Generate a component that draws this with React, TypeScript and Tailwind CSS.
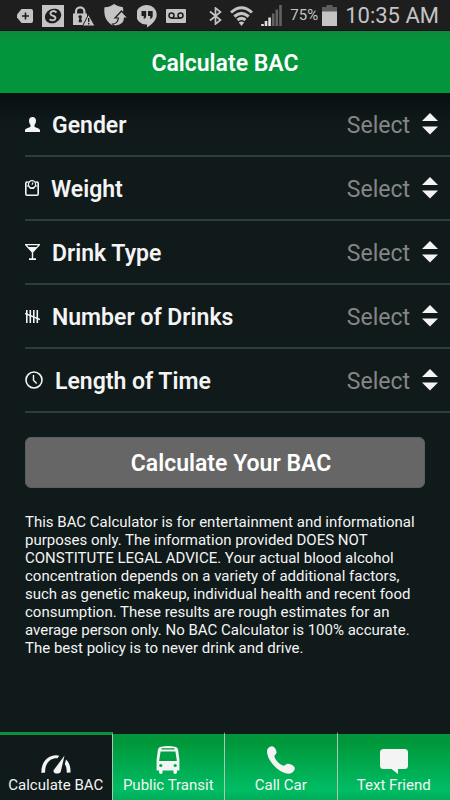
import React, { useState } from 'react';

interface FieldProps {
  id: string;
  label: string;
  options: string[];
  icon: React.ReactNode;
}

interface TabProps {
  label: string;
  icon: React.ReactNode;
  active: boolean;
  onClick: () => void;
}

const PersonIcon = () => (
  <svg width="15" height="15" viewBox="0 0 15 15" fill="currentColor">
    <path d="M7.500 0C5.300 0 4 1.500 4 3.800c0 1.700.6 3.200 1.500 4.100v1.600C5 11 0 10.700 0 13.500V15h15v-1.500c0-2.800-5-2.500-5.500-4V7.900C10.400 7 11 5.500 11 3.800 11 1.500 9.700 0 7.500 0z" />
  </svg>
);

const ScaleIcon = () => (
  <svg width="14" height="16" viewBox="0 0 14 16" fill="none" stroke="currentColor">
    <path d="M3.500 2H2Q.8 2 .8 3.200V14q0 1.200 1.200 1.200h10q1.200 0 1.200-1.200V3.200Q13.200 2 12 2h-1.500" strokeWidth="1.600" />
    <path d="M1.500 6h2l2 2.300h3l2-2.300h2" strokeWidth="1.200" />
    <circle cx="7" cy="4.300" r="3.600" strokeWidth="1.200" fill="#101a1a" />
    <path d="M7 4.800 8 2.500" strokeWidth="1.100" />
  </svg>
);

const GlassIcon = () => (
  <svg width="15" height="16" viewBox="0 0 15 16" fill="currentColor">
    <path d="M0 0h15v1L8.200 8.500v5.700H11V16H4v-1.800h2.800V8.500L0 1zm2 1.200L3.600 3h7.800L13 1.200z" fillRule="evenodd" />
  </svg>
);

const TallyIcon = () => (
  <svg width="15" height="13" viewBox="0 0 15 13" fill="none" stroke="currentColor">
    <path d="M1.800 0v13M5.300 0v13M8.800 0v13M12.300 0v13" strokeWidth="1.600" />
    <path d="M0 3.500 15 9.500" strokeWidth="1.400" />
  </svg>
);

const ClockIcon = () => (
  <svg width="18" height="18" viewBox="0 0 18 18" fill="none" stroke="currentColor">
    <circle cx="9" cy="9" r="8" strokeWidth="1.600" />
    <path d="M8.500 4v5.200l3.200 3.300" strokeWidth="1.400" />
  </svg>
);

const GaugeIcon = () => (
  <svg width="30" height="20" viewBox="0 0 30 20" fill="currentColor">
    <path d="M.5 19C-.2 9 6 1.200 15 1.200q2 0 3.400.5l-2 2.600C9 3.500 3.500 10 4.200 18.600z" />
    <path d="M23.500 1.500 19.800 17.500c-.8 3-8 3-7.200-1.200z" />
    <path d="M25 5.500c3.300 3 4.800 7.500 4.500 13l-3.800.3c.2-3.300-.3-6.300-1.900-8.800z" />
  </svg>
);

const BusIcon = () => (
  <svg width="24" height="28" viewBox="0 0 24 28">
    <path
      fill="currentColor"
      d="M5 .8Q12-.8 19 .8q2.800.7 3.100 3l1.300 10v10.700H21V26q0 2-1.800 2t-1.800-2v-1.500H6.600V26q0 2-1.800 2T3 26v-1.500H.6V13.800l1.300-10Q2.200 1.500 5 .8z"
    />
    <path d="M6 2.900h12" stroke="#009a44" strokeWidth="1.200" strokeLinecap="round" />
    <path d="M4.600 5.500h14.800l1.500 9.500H3.100z" fill="#00a047" />
    <circle cx="4.800" cy="19.500" r="1.600" fill="#00a94c" />
    <circle cx="19.200" cy="19.500" r="1.600" fill="#00a94c" />
  </svg>
);

const PhoneIcon = () => (
  <svg width="28" height="28" viewBox="0 0 28 28" fill="currentColor">
    <path d="M1 2.200C3 .2 5-.4 6.600.8 8.400 2.300 9.600 4.600 9.600 6.300c0 1.800-2.300 2.600-2.200 4.200.3 3 5.300 8.200 8.600 9.100 1.900.4 3.200-2 5-1.900 2 .2 5.300 1.600 6.400 3.300 1.400 2.200-1.400 6.600-5.200 6.700C12 27.800-.2 14 0 5.500Q0 3.400 1 2.200z" />
  </svg>
);

const BubbleIcon = () => (
  <svg width="28" height="25" viewBox="0 0 28 25" fill="currentColor">
    <path d="M3.500 0h21Q28 0 28 3.500v13q0 3.500-3.500 3.500H18v5l-6.500-5h-8Q0 20 0 16.500v-13Q0 0 3.500 0z" />
  </svg>
);

const StatusBar: React.FC = () => (
  <div className="flex h-[31px] items-center justify-between border-b border-[#1c1020] bg-[#1e1e1e] pt-px pr-[11px] pl-[17px] text-[#c4c4c4]">
    <div className="flex items-center gap-[9px]">
      <svg width="16" height="14" viewBox="0 0 16 14" fill="currentColor">
        <path d="M4.500 0H14q2 0 2 2v10q0 2-2 2H4.500L0 8.500v-3z" />
        <path d="M8.500 3.500v7M5 7h7" stroke="#1e1e1e" strokeWidth="1.600" />
      </svg>
      <svg width="22" height="22" viewBox="0 0 22 22">
        <path d="M0 0h22v22H0z" fill="currentColor" />
        <ellipse cx="11" cy="11" rx="8.500" ry="7" transform="rotate(-28 11 11)" fill="#1e1e1e" />
        <path
          d="M14.500 7.500Q12.500 5.500 10 6.300 7.500 7.500 9 9.700q1 .8 2.500 1.300 2.500 1 1.700 3-1.500 2.500-5.700.3"
          fill="none"
          stroke="currentColor"
          strokeWidth="1.900"
        />
      </svg>
      <svg width="22" height="20" viewBox="0 0 22 20">
        <path d="M3 8V5.500a4.200 4.200 0 0 1 8.400 0V8" fill="none" stroke="currentColor" strokeWidth="2.200" />
        <path d="M0 7.500h14V19H0z" fill="currentColor" />
        <path d="M5.300 11a1.800 1.800 0 1 1 3 1.300l.8 4H5.500l.8-4z" fill="#1e1e1e" />
        <path d="M15.500 8.500 22 20H9.500z" fill="currentColor" stroke="#1e1e1e" />
        <path d="M15.700 12v4M15.700 17v1.500" stroke="#1e1e1e" strokeWidth="1.400" />
      </svg>
      <svg width="24" height="23" viewBox="0 0 24 23">
        <path d="M10 0q4 2.800 9 3.200C20 12 17 19 10 22 2 18-.5 12 .5 3.200 5 3 7.500 2 10 0z" fill="currentColor" />
        <path
          d="M17.500 7 24 14h-3.500q0 7-8.500 8-2.500 0-3.500-2 5 0 6-6H11z"
          fill="currentColor"
          stroke="#1e1e1e"
          strokeWidth="1.200"
        />
      </svg>
      <svg width="20" height="24" viewBox="0 0 20 24">
        <path d="M10 1a9.600 9.600 0 0 1 9.700 9.700C19.700 16 15 20.500 10 23.500v-3A9.800 9.800 0 1 1 10 1z" fill="currentColor" />
        <path d="M4.500 7h4.700v5q0 2.500-2.500 3v-3H4.500zM11 7h4.700v5q0 2.500-2.500 3v-3H11z" fill="#1e1e1e" />
      </svg>
      <svg width="20" height="14" viewBox="0 0 20 14">
        <rect width="20" height="14" rx="1" fill="currentColor" />
        <g fill="none" stroke="#1e1e1e" strokeWidth="1.500">
          <circle cx="5.500" cy="6.500" r="2.500" />
          <circle cx="14.500" cy="6.500" r="2.500" />
          <path d="M5.500 9.200h9" />
        </g>
      </svg>
    </div>
    <div className="flex items-center gap-2">
      <svg width="13" height="18" viewBox="0 0 13 18" fill="none" stroke="currentColor" strokeWidth="1.700">
        <path d="M1 4.500 11.500 13 6.500 17V1l5 4L1 13.500" />
      </svg>
      <svg width="23" height="20" viewBox="0 0 23 20" fill="none" stroke="currentColor" strokeWidth="3">
        <path d="M1 6.500Q11.500-3 22 6.500M4.300 10.500q7.200-6.200 14.400 0M7.500 14q4-3.300 8 0" />
        <path d="M8.800 16.500q2.700-2 5.400 0L11.500 20z" fill="currentColor" stroke="none" />
      </svg>
      <svg width="21" height="21" viewBox="0 0 21 21" strokeWidth="2.600">
        <path d="M1.500 19V21M5 16v5M8.600 12.500V21" stroke="#e0e0e0" />
        <path d="M12.200 8.500V21M15.800 4.500V21M19.500 0v21" stroke="#626262" />
      </svg>
      <div className="flex items-center gap-1">
        <span className="text-[15px]">75%</span>
        <svg width="15" height="21" viewBox="0 0 15 21">
          <path d="M4.500 0h6v2H15v6H0V2h4.500z" fill="#5c5c5c" />
          <path d="M0 6.500h15V21H0z" fill="currentColor" />
        </svg>
      </div>
      <span className="text-[22px] whitespace-nowrap">10:35 AM</span>
    </div>
  </div>
);

const Field: React.FC<FieldProps> = ({ id, label, options, icon }) => (
  <div className="flex h-16 items-center border-b-2 border-[#2f3c3c]">
    <label htmlFor={id} className="flex flex-1 items-center gap-3 text-[23px] font-semibold">
      {icon}
      <span className="pt-1">{label}</span>
    </label>
    <div className="relative">
      <select
        id={id}
        defaultValue=""
        className="w-32 appearance-none bg-transparent pt-1 pr-10 text-[23px] text-[#858585] outline-none [text-align-last:right]"
      >
        <option value="">Select</option>
        {options.map((option) => (
          <option key={option}>{option}</option>
        ))}
      </select>
      <svg
        className="pointer-events-none absolute top-1/2 right-3 -translate-y-1/2"
        width="16"
        height="22"
        viewBox="0 0 16 22"
        fill="currentColor"
      >
        <path d="M8 0l8 8H0zM0 13.500h16L8 21.500z" />
      </svg>
    </div>
  </div>
);

const Tab: React.FC<TabProps> = ({ label, icon, active, onClick }) => (
  <button
    onClick={onClick}
    className={`flex h-[68px] flex-col items-center justify-end border-r border-[#a9c9b3] pb-1 text-[15px] leading-[22px] whitespace-nowrap last:border-r-0 ${
      active
        ? 'border-t-[3px] border-t-[#0a9140] bg-[#101a1a]'
        : 'border-t-2 border-t-[#101a1a] bg-linear-to-b from-[#009639] from-10% via-[#00bd64] via-85% to-[#00ad5a] bg-clip-padding'
    }`}
  >
    {icon}
    {label}
  </button>
);

const fields: FieldProps[] = [
  { id: 'gender', label: 'Gender', options: ['Female', 'Male'], icon: <PersonIcon /> },
  { id: 'weight', label: 'Weight', options: ['100 lbs', '150 lbs', '200 lbs'], icon: <ScaleIcon /> },
  { id: 'type', label: 'Drink Type', options: ['Beer', 'Wine', 'Liquor'], icon: <GlassIcon /> },
  { id: 'count', label: 'Number of Drinks', options: ['1', '2', '3', '4', '5'], icon: <TallyIcon /> },
  { id: 'time', label: 'Length of Time', options: ['1 hour', '2 hours', '3 hours'], icon: <ClockIcon /> },
];

const tabs = [
  { label: 'Calculate BAC', icon: <GaugeIcon /> },
  { label: 'Public Transit', icon: <BusIcon /> },
  { label: 'Call Car', icon: <PhoneIcon /> },
  { label: 'Text Friend', icon: <BubbleIcon /> },
];

const App: React.FC = () => {
  const [activeTab, setActiveTab] = useState('Calculate BAC');

  return (
    <div className="flex min-h-screen flex-col bg-[#101a1a] font-[Roboto,sans-serif] text-[#f4f4f4]">
      <StatusBar />
      <header className="flex h-[62px] items-center justify-center bg-linear-to-b from-[#0d8a3b] to-[#03953c] to-20% pt-1">
        <h1 className="text-[23px] font-semibold text-white">Calculate BAC</h1>
      </header>
      <main className="flex-1 bg-linear-to-b from-[#080f10] to-[#101a1a] to-[30px]">
        <form onSubmit={(e) => e.preventDefault()}>
          <div className="pl-[25px]">
            {fields.map((field) => (
              <Field key={field.id} {...field} />
            ))}
          </div>
          <div className="px-[25px] pt-6">
            <button
              type="submit"
              className="h-[51px] w-full rounded-md border border-[#586060] bg-[#666666] pt-1 pl-3 text-[23px] font-semibold text-white"
            >
              Calculate Your BAC
            </button>
          </div>
        </form>
        <p className="px-[25px] pt-[25px] text-[15px] leading-[18px]">
          This BAC Calculator is for entertainment and informational purposes only. The information provided DOES NOT
          CONSTITUTE LEGAL ADVICE. Your actual blood alcohol concentration depends on a variety of additional factors,
          such as genetic makeup, individual health and recent food consumption. These results are rough estimates for
          an average person only. No BAC Calculator is 100% accurate. The best policy is to never drink and drive.
        </p>
      </main>
      <nav className="grid grid-cols-4">
        {tabs.map((tab) => (
          <Tab
            key={tab.label}
            label={tab.label}
            icon={tab.icon}
            active={tab.label === activeTab}
            onClick={() => setActiveTab(tab.label)}
          />
        ))}
      </nav>
    </div>
  );
};

export default App;
